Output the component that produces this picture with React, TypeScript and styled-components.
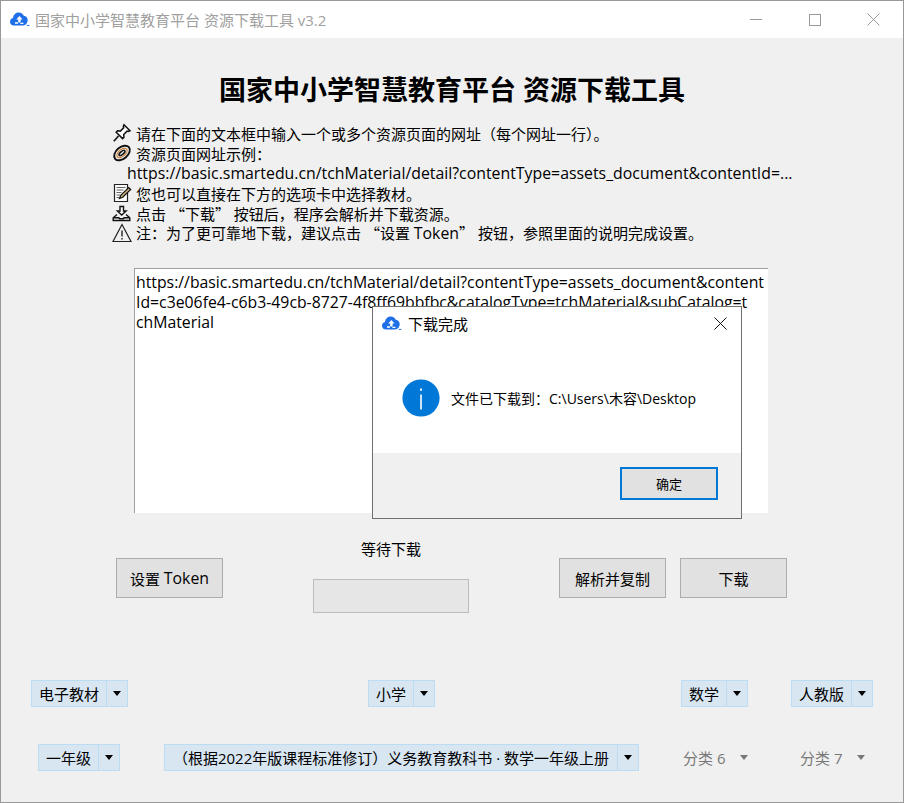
import styled, { createGlobalStyle } from "styled-components";

const UI_FONT = `"Open Sans", "Noto Sans CJK SC", sans-serif`;

const GlobalStyle = createGlobalStyle`
  html, body {
    margin: 0;
    padding: 0;
    background: #f0f0f0;
  }
  body {
    font-family: ${UI_FONT};
    color: #000;
  }
`;

const Window = styled.div`
  position: relative;
  box-sizing: border-box;
  width: 904px;
  height: 803px;
  border: 1px solid #999;
  background: #f0f0f0;
  display: flex;
  flex-direction: column;
  overflow: hidden;
`;

const TitleBar = styled.div`
  height: 37px;
  flex: none;
  background: #fff;
  display: flex;
  align-items: center;
  padding-left: 9px;
`;

const TitleText = styled.span`
  font-size: 15px;
  color: #a0a0a0;
  flex: 1;
  margin-left: 5px;
`;

const WinButton = styled.div`
  width: 59px;
  height: 37px;
  display: flex;
  align-items: center;
  justify-content: center;
`;

const Content = styled.div`
  flex: 1;
  display: flex;
  flex-direction: column;
`;

const Heading = styled.h1`
  margin: 33px 0 0;
  height: 38px;
  line-height: 38px;
  font-size: 27px;
  font-weight: 700;
  text-align: center;
`;

const Notes = styled.div`
  margin: 14px 0 0 111px;
  display: flex;
  flex-direction: column;
`;

const Note = styled.div<{ $indent?: boolean }>`
  height: 20px;
  display: flex;
  align-items: center;
  gap: 4px;
  font-size: 15px;
  white-space: pre;
  padding-left: ${(p) => (p.$indent ? "15px" : "0")};
`;

const NoteText = styled.span`
  white-space: pre;
`;

const Latin = styled.span`
  font-size: 15.85px;
`;

const Quote = styled.span`
  font-family: "Noto Sans CJK SC", sans-serif;
`;

const NoteIcon = styled.svg`
  width: 20px;
  height: 20px;
  flex: none;
`;

const UrlBox = styled.div`
  box-sizing: border-box;
  margin: 25px 0 0 133px;
  width: 634px;
  height: 245px;
  background: #fff;
  border-top: 1px solid #a0a0a0;
  border-left: 1px solid #a0a0a0;
  padding: 3px 1px;
  font-size: 15.8px;
  line-height: 20px;
  white-space: nowrap;
  overflow: hidden;
`;

const ActionRow = styled.div`
  margin: 26px 0 0 115px;
  width: 671px;
  display: flex;
  align-items: flex-start;
`;

const ActionButton = styled.div`
  box-sizing: border-box;
  width: 107px;
  height: 40px;
  margin-top: 19px;
  background: #e1e1e1;
  border: 1px solid #adadad;
  display: flex;
  align-items: center;
  justify-content: center;
  font-size: 15px;
  white-space: pre;
`;

const ProgressColumn = styled.div`
  margin-left: 90px;
  width: 156px;
  display: flex;
  flex-direction: column;
  align-items: center;
`;

const ProgressLabel = styled.div`
  font-size: 15px;
  line-height: 20px;
`;

const ProgressBar = styled.div`
  box-sizing: border-box;
  margin-top: 20px;
  width: 156px;
  height: 34px;
  background: #e6e6e6;
  border: 1px solid #bcbcbc;
`;

const RightActions = styled.div`
  margin-left: auto;
  display: flex;
  gap: 14px;
`;

const ComboRow = styled.div<{ $top: number; $left: number }>`
  margin: ${(p) => p.$top}px 0 0 ${(p) => p.$left}px;
  display: flex;
  height: 27px;
`;

const Combo = styled.div<{ $offset?: number }>`
  box-sizing: border-box;
  height: 27px;
  margin-left: ${(p) => p.$offset ?? 0}px;
  display: flex;
  align-items: stretch;
  background: #d8e6f2;
  border: 1px solid #bcdcf4;
  font-size: 15px;
`;

const ComboLabel = styled.div<{ $width: number }>`
  width: ${(p) => p.$width}px;
  display: flex;
  align-items: center;
  justify-content: center;
  white-space: nowrap;
`;

const ComboArrow = styled.div`
  width: 20px;
  border-left: 1px solid #bcdcf4;
  display: flex;
  align-items: center;
  justify-content: center;
`;

const Caret = styled.span<{ $muted?: boolean }>`
  width: 0;
  height: 0;
  border-left: 4.5px solid transparent;
  border-right: 4.5px solid transparent;
  border-top: 5px solid ${(p) => (p.$muted ? "#787878" : "#000")};
`;

const DisabledCombo = styled.div<{ $offset: number }>`
  width: 67px;
  height: 27px;
  margin-left: ${(p) => p.$offset}px;
  display: flex;
  align-items: center;
  gap: 15px;
  font-size: 15px;
  color: #787878;
  white-space: nowrap;
`;

const Dialog = styled.div`
  position: absolute;
  left: 371px;
  top: 305px;
  box-sizing: border-box;
  width: 370px;
  height: 213px;
  background: #fff;
  border: 1px solid #6e6e6e;
  display: flex;
  flex-direction: column;
`;

const DialogHeader = styled.div`
  box-sizing: border-box;
  height: 34px;
  flex: none;
  display: flex;
  align-items: center;
  padding: 0 14px 2px 9px;
  gap: 6px;
  font-size: 15px;
`;

const DialogTitle = styled.span`
  flex: 1;
`;

const DialogBody = styled.div`
  flex: 1;
  display: flex;
  align-items: center;
  padding: 2px 0 0 29px;
  gap: 11px;
  font-size: 14px;
`;

const DialogFooter = styled.div`
  height: 65px;
  flex: none;
  background: #f0f0f0;
  display: flex;
  justify-content: flex-end;
  align-items: flex-start;
  padding: 14px 23px 0 0;
  box-sizing: border-box;
`;

const OkButton = styled.div`
  box-sizing: border-box;
  width: 98px;
  height: 33px;
  background: #e1e1e1;
  border: 2px solid #0078d7;
  display: flex;
  align-items: center;
  justify-content: center;
  font-size: 13px;
`;

function CloudLogo() {
  return (
    <svg width="20" height="15" viewBox="0 0 20 15">
      <path
        d="M4 13.5C1.6 13.5 0 11.8 0 9.7 0 7.8 1.2 6.4 3 6 3.4 2.6 6 .6 8.8.6c2.4 0 4.2 1.3 5 3.2 2.2.1 3.9 1.9 3.9 4.3 0 2.7-1.9 5.4-4.6 5.4z"
        fill="#1f6fe8"
      />
      <path d="M9.4 4l3.2 3.4h-2v3H8.2v-3h-2z" fill="#fff" />
      <path d="M5 11h3M10.4 11.4h3" stroke="#fff" strokeWidth="1.3" />
      <path d="M16.8 13.4h2.6" stroke="#1f6fe8" strokeWidth="1" />
    </svg>
  );
}

function PinIcon() {
  return (
    <NoteIcon viewBox="0 0 20 20" fill="none" stroke="#111" strokeWidth="1.5">
      <path d="M12 1.8l6 6-1.6.7-1.3-.4-3.4 3.4.3 2.8-1.4 1.3-6.4-6.4 1.3-1.4 2.8.3 3.4-3.4-.4-1.3z" fill="#fff" />
      <path d="M6.5 13L1.8 18.2" strokeWidth="1.6" />
    </NoteIcon>
  );
}

function ClipIcon() {
  return (
    <NoteIcon viewBox="0 0 20 20" fill="none" stroke="#111" strokeWidth="1.9">
      <ellipse cx="10" cy="10" rx="9" ry="5.8" transform="rotate(-40 10 10)" />
      <ellipse cx="10" cy="10" rx="6" ry="3.4" transform="rotate(-40 10 10)" stroke="#c8792a" strokeWidth="1.2" />
      <ellipse cx="10" cy="10" rx="3.6" ry="1.5" transform="rotate(-40 10 10)" strokeWidth="1.6" />
    </NoteIcon>
  );
}

function NoteEditIcon() {
  return (
    <NoteIcon viewBox="0 0 20 20" fill="none" stroke="#222" strokeWidth="1.2">
      <path d="M2.5 1.5h13v17h-13z" fill="#fff" />
      <path d="M4.5 4.5h9M4.5 7h7M4.5 9.5h5M4.5 12h3.5M4.5 14.5h3" stroke="#666" />
      <path d="M7.5 15.5l1.2-3.2 8-7.8 2 2-8 7.8z" fill="#c9b27c" stroke="#111" />
    </NoteIcon>
  );
}

function DownloadTrayIcon() {
  return (
    <NoteIcon viewBox="0 0 20 20" fill="none" stroke="#111" strokeWidth="1.4">
      <path d="M8 3.5h3.5v4.5h2.6L9.7 12 5.4 8H8z" fill="#fff" />
      <path d="M5 11.5L1.2 14.8v2.7h16.6v-2.7L14 11.5" />
      <path d="M1.2 14.8h5.6l.8 1h3.8l.8-1h5.6" strokeWidth="1.6" />
    </NoteIcon>
  );
}

function WarnIcon() {
  return (
    <NoteIcon viewBox="0 0 20 20" fill="none" stroke="#222" strokeWidth="1.2">
      <path d="M10 1.5L19 18.5H1z" />
      <path d="M10 7.5v6M10 15v1.6" strokeWidth="1.4" />
    </NoteIcon>
  );
}

function CloseGlyph({ color }: { color: string }) {
  return (
    <svg width="13" height="13" viewBox="0 0 13 13" stroke={color} strokeWidth="1">
      <path d="M.5.5l12 12M12.5.5l-12 12" />
    </svg>
  );
}

function InfoBadge() {
  return (
    <svg width="38" height="38" viewBox="0 0 38 38">
      <circle cx="19" cy="19" r="18.6" fill="#0078d7" />
      <path d="M19 15.5v15" stroke="#fff" strokeWidth="1.6" />
      <path d="M19 9.5v2.2" stroke="#fff" strokeWidth="1.8" />
    </svg>
  );
}

export default function App() {
  return (
    <Window>
      <GlobalStyle />
      <TitleBar>
        <CloudLogo />
        <TitleText>国家中小学智慧教育平台 资源下载工具 v3.2</TitleText>
        <WinButton>
          <svg width="12" height="1"><rect width="12" height="1" fill="#999" /></svg>
        </WinButton>
        <WinButton>
          <svg width="12" height="12"><rect x=".5" y=".5" width="11" height="11" fill="none" stroke="#999" /></svg>
        </WinButton>
        <WinButton>
          <CloseGlyph color="#999" />
        </WinButton>
      </TitleBar>
      <Content>
        <Heading>国家中小学智慧教育平台 资源下载工具</Heading>
        <Notes>
          <Note><PinIcon /><NoteText>请在下面的文本框中输入一个或多个资源页面的网址（每个网址一行）。</NoteText></Note>
          <Note><ClipIcon /><NoteText>资源页面网址示例：</NoteText></Note>
          <Note $indent><Latin>https://basic.smartedu.cn/tchMaterial/detail?contentType=assets_document&amp;contentId=...</Latin></Note>
          <Note><NoteEditIcon /><NoteText>您也可以直接在下方的选项卡中选择教材。</NoteText></Note>
          <Note><DownloadTrayIcon /><NoteText>点击 <Quote>“下载”</Quote> 按钮后，程序会解析并下载资源。</NoteText></Note>
          <Note><WarnIcon /><NoteText>注：为了更可靠地下载，建议点击 <Quote>“</Quote>设置 <Latin>Token</Latin><Quote>”</Quote> 按钮，参照里面的说明完成设置。</NoteText></Note>
        </Notes>
        <UrlBox>
          https://basic.smartedu.cn/tchMaterial/detail?contentType=assets_document&amp;content<br />
          Id=c3e06fe4-c6b3-49cb-8727-4f8ff69bbfbc&amp;catalogType=tchMaterial&amp;subCatalog=t<br />
          chMaterial
        </UrlBox>
        <ActionRow>
          <ActionButton>设置 <Latin>Token</Latin></ActionButton>
          <ProgressColumn>
            <ProgressLabel>等待下载</ProgressLabel>
            <ProgressBar />
          </ProgressColumn>
          <RightActions>
            <ActionButton>解析并复制</ActionButton>
            <ActionButton>下载</ActionButton>
          </RightActions>
        </ActionRow>
        <ComboRow $top={67} $left={30}>
          <Combo><ComboLabel $width={74}>电子教材</ComboLabel><ComboArrow><Caret /></ComboArrow></Combo>
          <Combo $offset={240}><ComboLabel $width={44}>小学</ComboLabel><ComboArrow><Caret /></ComboArrow></Combo>
          <Combo $offset={246}><ComboLabel $width={44}>数学</ComboLabel><ComboArrow><Caret /></ComboArrow></Combo>
          <Combo $offset={43}><ComboLabel $width={59}>人教版</ComboLabel><ComboArrow><Caret /></ComboArrow></Combo>
        </ComboRow>
        <ComboRow $top={37} $left={37}>
          <Combo><ComboLabel $width={59}>一年级</ComboLabel><ComboArrow><Caret /></ComboArrow></Combo>
          <Combo $offset={44}><ComboLabel $width={452}>（根据2022年版课程标准修订）义务教育教科书 · 数学一年级上册</ComboLabel><ComboArrow><Caret /></ComboArrow></Combo>
          <DisabledCombo $offset={44}>分类 6<Caret $muted /></DisabledCombo>
          <DisabledCombo $offset={50}>分类 7<Caret $muted /></DisabledCombo>
        </ComboRow>
      </Content>
      <Dialog>
        <DialogHeader>
          <CloudLogo />
          <DialogTitle>下载完成</DialogTitle>
          <CloseGlyph color="#111" />
        </DialogHeader>
        <DialogBody>
          <InfoBadge />
          <span>文件已下载到：C:\Users\木容\Desktop</span>
        </DialogBody>
        <DialogFooter>
          <OkButton>确定</OkButton>
        </DialogFooter>
      </Dialog>
    </Window>
  );
}
